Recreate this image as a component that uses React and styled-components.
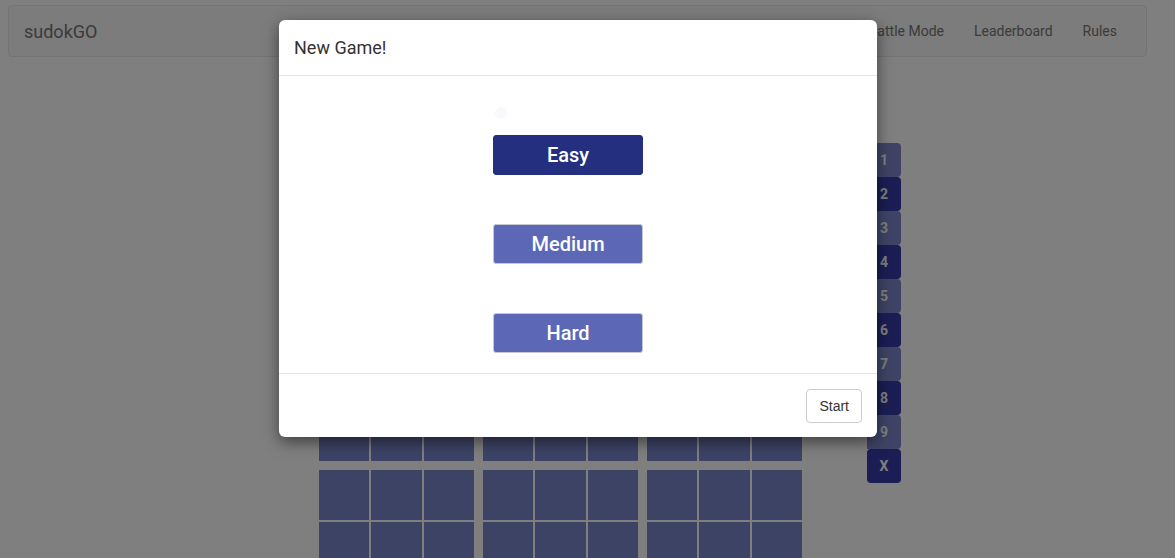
import React from 'react';
import styled, { createGlobalStyle } from 'styled-components';

const GlobalStyle = createGlobalStyle`
  html, body {
    margin: 0;
    padding: 0;
    background: #fff;
    font-family: Roboto, "Liberation Sans", Arial, sans-serif;
    overflow: hidden;
  }
`;

const levels = [
  { name: 'Easy', active: true },
  { name: 'Medium', active: false },
  { name: 'Hard', active: false },
];

const pad = ['1', '2', '3', '4', '5', '6', '7', '8', '9', 'X'];

const App = () => {
  return (
    <Page>
      <GlobalStyle />
      <Navbar>
        <Brand>sudokGO</Brand>
        <NavLinks>
          <NavLink>Battle Mode</NavLink>
          <NavLink>Leaderboard</NavLink>
          <NavLink>Rules</NavLink>
        </NavLinks>
      </Navbar>
      <Board>
        <Grid>
          {Array.from({ length: 9 }).map((_, b) => (
            <Box key={b}>
              {Array.from({ length: 9 }).map((_, c) => (
                <Cell key={c} />
              ))}
            </Box>
          ))}
        </Grid>
        <Pad>
          {pad.map((n, i) => (
            <PadKey key={n} dark={i % 2 === 1 || n === 'X'} round={n === 'X'}>
              {n}
            </PadKey>
          ))}
        </Pad>
      </Board>
      <Backdrop />
      <Modal>
        <ModalHeader>
          <Title>New Game!</Title>
        </ModalHeader>
        <ModalBody>
          <Radio />
          {levels.map((l) => (
            <LevelButton key={l.name} active={l.active}>
              {l.name}
            </LevelButton>
          ))}
        </ModalBody>
        <ModalFooter>
          <StartButton>Start</StartButton>
        </ModalFooter>
      </Modal>
    </Page>
  );
};

const Page = styled.div`
  width: 1175px;
  height: 558px;
  overflow: hidden;
  position: relative;
`;

const Navbar = styled.nav`
  margin: 5px 28px 0 8px;
  height: 50px;
  background: #f8f8f8;
  border: 1px solid #e7e7e7;
  border-radius: 4px;
  display: flex;
  align-items: center;
  justify-content: space-between;
`;

const Brand = styled.div`
  padding-left: 15px;
  font-size: 18px;
  color: #777;
`;

const NavLinks = styled.div`
  display: flex;
  padding-right: 14px;
`;

const NavLink = styled.div`
  padding: 0 15px;
  font-size: 14px;
  color: #777;
`;

const Board = styled.div`
  display: flex;
  margin: 85px 0 0 319px;
  gap: 65px;
`;

const Grid = styled.div`
  display: grid;
  grid-template-columns: repeat(3, 155px);
  grid-auto-rows: 155px;
  gap: 9px;
`;

const Box = styled.div`
  display: grid;
  grid-template-columns: repeat(3, 1fr);
  grid-template-rows: repeat(3, 1fr);
  gap: 2px;
`;

const Cell = styled.div`
  background: #7986cb;
`;

const Pad = styled.div`
  display: flex;
  flex-direction: column;
  margin-top: 1px;
`;

const PadKey = styled.div`
  width: 34px;
  height: 34px;
  display: flex;
  align-items: center;
  justify-content: center;
  background: ${(p) => (p.dark ? '#363cab' : '#7e88cc')};
  color: #fff;
  font-weight: 700;
  font-size: 14px;
  border-radius: ${(p) => (p.round ? '4px' : '0 4px 4px 0')};
`;

const Backdrop = styled.div`
  position: absolute;
  inset: 0;
  background: rgba(0, 0, 0, 0.5);
`;

const Modal = styled.div`
  position: absolute;
  left: 279px;
  top: 20px;
  width: 598px;
  background: #fff;
  border-radius: 6px;
  box-shadow: 0 5px 15px rgba(0, 0, 0, 0.5);
`;

const ModalHeader = styled.div`
  height: 56px;
  padding: 0 15px;
  display: flex;
  align-items: center;
  border-bottom: 1px solid #e5e5e5;
  box-sizing: border-box;
`;

const Title = styled.h4`
  margin: 0;
  font-size: 18px;
  font-weight: 400;
  color: #333;
`;

const ModalBody = styled.div`
  height: 297px;
  box-sizing: border-box;
  padding: 59px 0 0 214px;
  display: flex;
  flex-direction: column;
  align-items: flex-start;
  gap: 49px;
  position: relative;
`;

const Radio = styled.span`
  position: absolute;
  left: 216px;
  top: 31px;
  width: 12px;
  height: 12px;
  border-radius: 50%;
  background: #f8f9fc;
`;

const LevelButton = styled.button`
  width: 150px;
  height: 40px;
  box-sizing: border-box;
  border-radius: 3px;
  border: 1px solid ${(p) => (p.active ? '#242f7f' : '#c5c7d2')};
  background: ${(p) => (p.active ? '#242f7f' : '#5c67b6')};
  color: #fff;
  font-family: Roboto, "Liberation Sans", sans-serif;
  font-weight: 500;
  font-size: 20px;
`;

const ModalFooter = styled.div`
  height: 64px;
  border-top: 1px solid #e5e5e5;
  box-sizing: border-box;
  display: flex;
  align-items: center;
  justify-content: flex-end;
  padding: 0 15px;
`;

const StartButton = styled.button`
  height: 34px;
  padding: 0 12px;
  background: #fff;
  border: 1px solid #ccc;
  border-radius: 4px;
  font-family: "Liberation Sans", Arial, sans-serif;
  font-size: 14px;
  color: #333;
`;

export default App;
